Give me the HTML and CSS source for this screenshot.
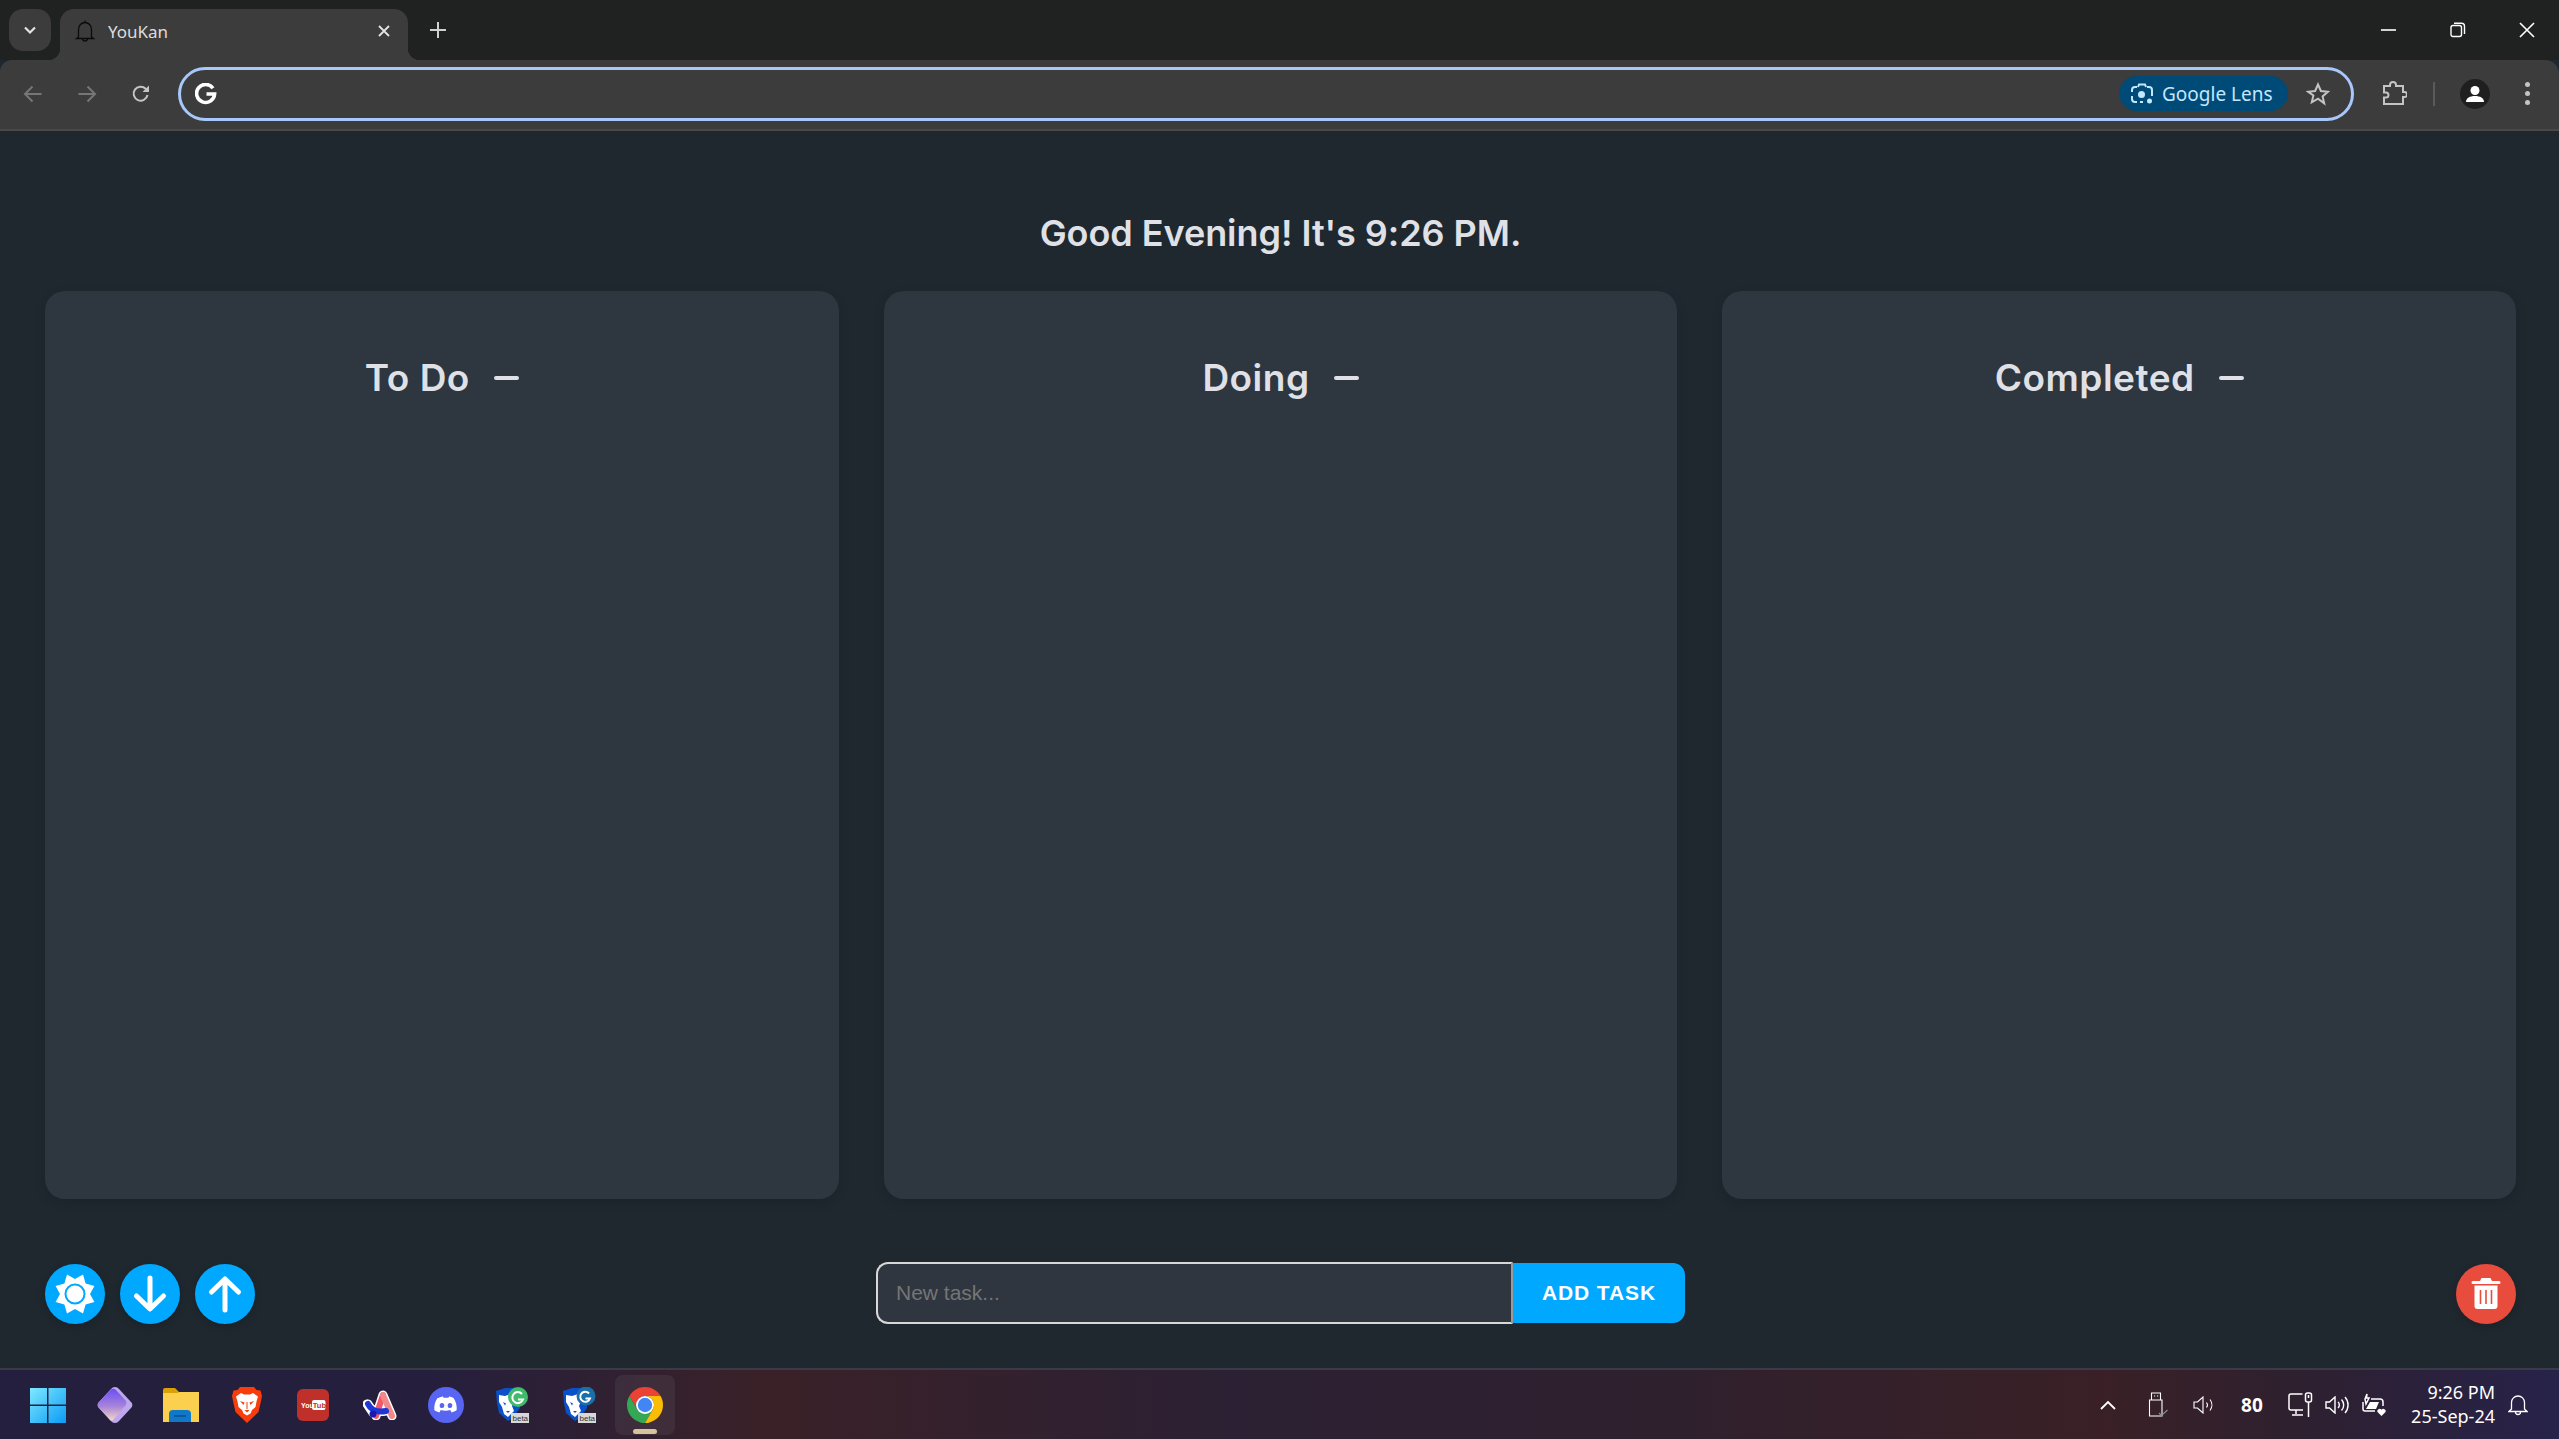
FILE: index.html
```html
<!DOCTYPE html>
<html lang="en">
<head>
  <meta charset="UTF-8" />
  <meta name="viewport" content="width=device-width,initial-scale=1.0" />
  <title>YouKan</title>
  <link rel="stylesheet" href="styles.css">
</head>
<body>
  <div class="tabstrip">
    <div class="tab-search">
      <svg width="16" height="16" viewBox="0 0 16 16"><path d="M3 5.500l5 5 5-5" fill="none" stroke="#e3e3e3" stroke-width="2.200"/></svg>
    </div>
    <div class="tab">
      <svg class="tab-bell" width="22" height="24" viewBox="0 0 22 24"><path d="M11 1.500v2M4.500 18V10.500a6.500 7 0 0 1 13 0V18l2 1.500H2.500zM8.500 19.500a2.500 2.500 0 0 0 5 0" fill="none" stroke="#0b0b0b" stroke-width="1.300"/></svg>
      <span class="tab-title">YouKan</span>
      <svg class="tab-close" width="12" height="12" viewBox="0 0 12 12"><path d="M1 1l10 10M11 1L1 11" stroke="#e3e3e3" stroke-width="1.800"/></svg>
    </div>
    <svg class="new-tab" width="16" height="16" viewBox="0 0 16 16"><path d="M8 0v16M0 8h16" stroke="#d0d0d0" stroke-width="2"/></svg>
    <div class="window-btns">
      <div class="window-btn"><svg width="16" height="16" viewBox="0 0 16 16"><path d="M0 8h15" stroke="#fff" stroke-width="1.600"/></svg></div>
      <div class="window-btn"><svg width="16" height="16" viewBox="0 0 16 16"><rect x="1" y="3.500" width="10.500" height="11" rx="2" fill="none" stroke="#fff" stroke-width="1.400"/><path d="M4 1.200h7.500a3 3 0 0 1 3 3V12" fill="none" stroke="#fff" stroke-width="1.400"/></svg></div>
      <div class="window-btn"><svg width="16" height="16" viewBox="0 0 16 16"><path d="M1 1l14 14M15 1L1 15" stroke="#fff" stroke-width="1.600"/></svg></div>
    </div>
  </div>

  <div class="toolbar">
    <div class="nav-btn"><svg width="20" height="20" viewBox="0 0 20 20"><path d="M18.500 10H2M9.500 2.500L2 10l7.500 7.500" fill="none" stroke="#767676" stroke-width="2"/></svg></div>
    <div class="nav-btn"><svg width="20" height="20" viewBox="0 0 20 20"><path d="M1.500 10H18M10.500 2.500L18 10l-7.500 7.500" fill="none" stroke="#767676" stroke-width="2"/></svg></div>
    <div class="nav-btn"><svg width="20" height="20" viewBox="0 0 20 20"><path d="M16.500 11a7 7 0 1 1-1.800-6.200L17 7" fill="none" stroke="#c4c4c4" stroke-width="2"/><path d="M18 1.500V8h-6.500z" fill="#c4c4c4"/></svg></div>
    <div class="omnibox">
      <svg class="omni-g" width="22" height="22" viewBox="0 0 22 22"><path d="M18 5.300A9 9 0 1 0 19.600 11H11.500" fill="none" stroke="#fff" stroke-width="3.600"/></svg>
      <div class="lens-pill">
        <svg width="24" height="24" viewBox="0 0 24 24"><path d="M7 5H5a3 3 0 0 0-3 3v2M2 14v3a3 3 0 0 0 3 3h2M10 20h3M17 5h2a3 3 0 0 1 3 3v6M8 5l1-2.500h6L16 5" fill="none" stroke="#c2e7ff" stroke-width="2"/><circle cx="11.500" cy="12.500" r="3.500" fill="#c2e7ff"/><circle cx="19.500" cy="19" r="2.500" fill="#c2e7ff"/></svg>
        <span>Google Lens</span>
      </div>
      <svg class="star" width="24" height="24" viewBox="0 0 24 24"><path d="M12 2.500l2.900 6.500 7 .7-5.300 4.700 1.600 6.900L12 16.700l-6.200 3.600 1.600-6.900L2.100 9.700l7-.7z" fill="none" stroke="#c4c4c4" stroke-width="2"/></svg>
    </div>
    <div class="toolbar-right">
      <svg class="ext" width="25" height="25" viewBox="0 0 25 25"><path d="M2 5h6V4a3 3 0 0 1 6 0v1h7v6h1.500a2.500 2.500 0 0 1 0 5H21v7H2v-6.500h2a2.500 2.500 0 0 0 0-5H2z" fill="none" stroke="#c4c4c4" stroke-width="2"/></svg>
      <div class="toolbar-sep"></div>
      <div class="avatar">
        <svg width="30" height="30" viewBox="0 0 30 30"><circle cx="15" cy="11.500" r="4.500" fill="#fff"/><path d="M6 23c0-4 4-6 9-6s9 2 9 6z" fill="#fff"/></svg>
      </div>
      <div class="dots"><i></i><i></i><i></i></div>
    </div>
  </div>

  <main class="page">
    <h1 class="greeting">Good Evening! It's 9:26 PM.</h1>

    <div class="board">
      <section class="column">
        <div class="column-head"><h2>To Do</h2><span class="collapse"></span></div>
      </section>
      <section class="column">
        <div class="column-head"><h2>Doing</h2><span class="collapse"></span></div>
      </section>
      <section class="column">
        <div class="column-head"><h2>Completed</h2><span class="collapse"></span></div>
      </section>
    </div>

    <div class="footer">
      <div class="footer-left">
        <button class="round-btn">
          <svg width="60" height="60" viewBox="0 0 60 60"><path d="M45 30L49.400 38 40.600 40.600 38 49.400 30 45 22 49.400 19.400 40.600 10.600 38 15 30 10.600 22 19.400 19.400 22 10.600 30 15 38 10.600 40.600 19.400 49.400 22z" fill="#fff"/><circle cx="30" cy="30" r="9.500" fill="#fff" stroke="#00a8ff" stroke-width="2"/></svg>
        </button>
        <button class="round-btn">
          <svg width="60" height="60" viewBox="0 0 60 60"><path d="M30 14V44M16.500 32L30 45 43.500 32" fill="none" stroke="#fff" stroke-width="5" stroke-linecap="round" stroke-linejoin="round"/></svg>
        </button>
        <button class="round-btn">
          <svg width="60" height="60" viewBox="0 0 60 60"><path d="M30 46V16M16.500 28L30 15 43.500 28" fill="none" stroke="#fff" stroke-width="5" stroke-linecap="round" stroke-linejoin="round"/></svg>
        </button>
      </div>
      <div class="task-form">
        <input class="task-input" type="text" placeholder="New task..." />
        <button class="task-add">ADD TASK</button>
      </div>
      <div class="footer-right">
        <button class="round-btn round-btn-danger">
          <svg width="60" height="60" viewBox="0 0 60 60"><path d="M24 17l1.500-3h9L36 17h7a1.500 1.500 0 0 1 0 3H17a1.500 1.500 0 0 1 0-3z" fill="#fff"/><path d="M18.500 21.500h23V42a3 3 0 0 1-3 3h-17a3 3 0 0 1-3-3z" fill="#fff"/><path d="M24.500 26v14M30 26v14M35.500 26v14" stroke="#e74c3c" stroke-width="1.600"/></svg>
        </button>
      </div>
    </div>
  </main>

  <footer class="taskbar">
    <div class="task-icons">
      <div class="task-icon">
        <svg width="36" height="36" viewBox="0 0 36 36"><defs><linearGradient id="winG" x1="0" y1="0" x2="1" y2="1"><stop offset="0" stop-color="#7fe9ff"/><stop offset="1" stop-color="#0a9bf5"/></linearGradient></defs><path d="M0 1h17v16.500H0zM18.500 1H36v16.500H18.500zM0 19h17v17H0zM18.500 19H36v17H18.500z" fill="url(#winG)"/></svg>
      </div>
      <div class="task-icon task-icon-gem">
        <svg width="36" height="38" viewBox="0 0 36 38"><defs><linearGradient id="gemG" x1="0" y1="0" x2="0" y2="1"><stop offset="0" stop-color="#6b4ff5"/><stop offset=".55" stop-color="#a884d8"/><stop offset="1" stop-color="#f3d9c4"/></linearGradient></defs><path d="M14 3a5 5 0 0 1 8 0l12 13a4 4 0 0 1 0 6L22 35a5 5 0 0 1-8 0L2 22a4 4 0 0 1 0-6z" fill="#bfa7ee"/><path d="M14 3.500a4 4 0 0 1 5 .5l10 11c1 2 0 4-1 5L16 34c-1 1-2 1-3 0L2 22a4 4 0 0 1 0-6z" fill="url(#gemG)"/></svg>
      </div>
      <div class="task-icon">
        <svg width="36" height="34" viewBox="0 0 36 34"><path d="M0 2a2 2 0 0 1 2-2h10l4 4h20v4H0z" fill="#d9a106"/><path d="M0 5h14l3-1h19v30H0z" fill="#fcd04f"/><path d="M6 34v-8a4 4 0 0 1 4-4h14a4 4 0 0 1 4 4v8z" fill="#0f78c9"/><path d="M11 28h12" stroke="#0a4f8a" stroke-width="1.500"/></svg>
      </div>
      <div class="task-icon">
        <svg width="30" height="36" viewBox="0 0 30 36"><path d="M8 0h14l2.500 3 4 .5L30 9l-1 5-2.500 11L15 36 3.500 25 1 14 0 9l1.500-5.500 4-.5z" fill="#f83c0c"/><path d="M9 6l3 1.500h6L21 6l5 3.500-1.500 5-1 5.500-3.500 3-1.500 3.500-3.500 2-3.500-2L10 23l-3.500-3-1-5.500L4 9.500z" fill="#fff"/><path d="M8 14l4.500 1.500-1 2.500zM22 14l-4.500 1.500 1 2.500zM12.500 23h5L15 25.500z" fill="#f83c0c"/><path d="M15 15v7" stroke="#f83c0c" stroke-width="1"/></svg>
      </div>
      <div class="task-icon">
        <svg width="32" height="32" viewBox="0 0 32 32"><rect width="32" height="32" rx="6" fill="#c0302b"/><text x="4" y="19" class="yt-you">You</text><rect x="15" y="11" width="13.500" height="10" rx="2" fill="#fff"/><text x="15.800" y="19" class="yt-tube">Tube</text></svg>
      </div>
      <div class="task-icon task-icon-arc">
        <svg width="36" height="30" viewBox="0 0 36 30"><path d="M5 14c3 6 8 9 18 7M13 26L20 5l9 21M4 14l6 9" fill="none" stroke="#fff" stroke-width="9" stroke-linecap="round" stroke-linejoin="round"/><path d="M13 26L20 5" fill="none" stroke="#f2596a" stroke-width="6" stroke-linecap="round"/><path d="M20 5l9 21" fill="none" stroke="#f08a8a" stroke-width="6" stroke-linecap="round"/><path d="M5 14c3 6 8 9 18 7" fill="none" stroke="#1f36d6" stroke-width="6" stroke-linecap="round"/><circle cx="10" cy="24" r="3.500" fill="#1a1ab0"/></svg>
      </div>
      <div class="task-icon">
        <svg width="36" height="36" viewBox="0 0 36 36"><circle cx="18" cy="18" r="18" fill="#5865f2"/><path d="M10.500 11c2-1 3.500-1.500 4.500-1.500l.6 1.200h4.800l.6-1.200c1 0 2.500.5 4.500 1.500 2.500 3.500 3.500 7.500 3.200 12-1.700 1.300-3.500 2.100-5 2.500l-1.200-1.900-.2-.6c-3 1.100-6.600 1.100-9.600 0l-.2.600-1.200 1.900c-1.500-.4-3.300-1.200-5-2.500-.3-4.500.7-8.500 3.200-12z" fill="#fff"/><ellipse cx="14" cy="18.500" rx="2.300" ry="2.600" fill="#5865f2"/><ellipse cx="22" cy="18.500" rx="2.300" ry="2.600" fill="#5865f2"/></svg>
      </div>
      <div class="task-icon">
        <svg width="36" height="36" viewBox="0 0 36 36"><path d="M2 4l9-3h11l4 8v12l-7 10-5 3-9-8-2-10z" fill="#0a50c8"/><path d="M5 8l6 1 6-2 3 7-2 5 2 5-6 6-4-3-2-7-3-5zM9 15l3 1.500-1 2zM12 24h4l-2 2z" fill="#fff" fill-rule="evenodd"/><circle cx="24" cy="10" r="10" fill="#3fbb6b"/><path d="M28 7a5.500 5.500 0 1 0 1 5.500h-5" fill="none" stroke="#fff" stroke-width="2"/><rect x="17" y="26" width="18" height="10" fill="#d8d8d8"/><text x="18.500" y="34" class="beta-label">beta</text></svg>
      </div>
      <div class="task-icon">
        <svg width="36" height="36" viewBox="0 0 36 36"><path d="M2 4l9-3h11l4 8v12l-7 10-5 3-9-8-2-10z" fill="#0a50c8"/><path d="M5 8l6 1 6-2 3 7-2 5 2 5-6 6-4-3-2-7-3-5zM9 15l3 1.500-1 2zM12 24h4l-2 2z" fill="#fff" fill-rule="evenodd"/><circle cx="25" cy="9" r="9.500" fill="#1c6ea8"/><path d="M28 6.500a5 5 0 1 0 1 5h-4.500" fill="none" stroke="#fff" stroke-width="2"/><rect x="17" y="26" width="18" height="10" fill="#d8d8d8"/><text x="18.500" y="34" class="beta-label">beta</text></svg>
      </div>
      <div class="task-icon task-icon-active">
        <svg width="36" height="36" viewBox="4 4 40 40"><path d="M6.680 14A20 20 0 0 1 41.320 14H24a10 10 0 0 0-8.660 15z" fill="#ea4335"/><path d="M6.680 14A20 20 0 0 0 24 44L32.660 29H15.340z" fill="#34a853"/><path d="M41.320 14A20 20 0 0 1 24 44L32.660 29A10 10 0 0 0 24 14z" fill="#fbbc04"/><circle cx="24" cy="24" r="10" fill="#fff"/><circle cx="24" cy="24" r="8" fill="#4285f4"/></svg>
        <span class="active-mark"></span>
      </div>
    </div>

    <div class="tray">
      <svg width="16" height="10" viewBox="0 0 16 10"><path d="M1 9l7-7 7 7" fill="none" stroke="#fff" stroke-width="1.800"/></svg>
      <svg class="tray-usb" width="21" height="25" viewBox="0 0 21 25"><path d="M2 8h12v16H1.500V8zM3.500 8V1h9v7" fill="none" stroke="#fff" stroke-width="1.100"/><path d="M6 4h1.200M9 4h1.200" stroke="#fff"/><path d="M11 21l2.500 2.500 6-5.500" fill="none" stroke="#8e8e8e" stroke-width="1.100"/></svg>
      <svg class="tray-gap" width="22" height="18" viewBox="0 0 22 18"><path d="M1 6h3.500L10 1v16l-5.500-5H1z" fill="none" stroke="#fff" stroke-width="1.100"/><path d="M13.500 6.500a4 4 0 0 1 0 5M17 3.500a9 9 0 0 1 0 11" fill="none" stroke="#fff" stroke-width="1.100"/></svg>
      <span class="tray-temp">80</span>
      <svg class="tray-gap-sm" width="25" height="25" viewBox="0 0 25 25"><path d="M14.500 2H3a2 2 0 0 0-2 2v12a2 2 0 0 0 2 2h12M8 18v4M4 23h11" fill="none" stroke="#fff" stroke-width="1.500"/><rect x="17.500" y="1" width="6" height="9" rx="2" fill="none" stroke="#fff" stroke-width="1.500"/><path d="M20.500 10v15M20.500 3v3" stroke="#fff" stroke-width="1.500"/></svg>
      <svg class="tray-gap-xs" width="24" height="18" viewBox="0 0 24 18"><path d="M1 6h3.500L10 1v16l-5.500-5H1z" fill="none" stroke="#fff" stroke-width="1.400"/><path d="M13 6a4 4 0 0 1 0 6M16.500 3.500a8 8 0 0 1 0 11M20 1a12 12 0 0 1 0 16" fill="none" stroke="#fff" stroke-width="1.400"/></svg>
      <svg class="tray-gap-xs" width="25" height="24" viewBox="0 0 25 24"><path d="M4 6L6 1 5.500 5H8L5 11zM2 9v7a2 2 0 0 0 2 2h10M10 6h9a3 3 0 0 1 3 3v4" fill="none" stroke="#fff" stroke-width="1.500"/><path d="M5 16l4-7h9l-3 7z" fill="#fff"/><path d="M20.500 23l-4-4a2.300 2.300 0 0 1 4-2.200 2.300 2.300 0 0 1 4 2.200z" fill="#fff"/></svg>
      <div class="clock">
        <span>9:26 PM</span>
        <span>25-Sep-24</span>
      </div>
      <svg class="tray-bell" width="20" height="22" viewBox="0 0 20 22"><path d="M3.500 15V8.500a6.500 6.500 0 0 1 13 0V15l2.500 2.500H1zM7.500 18a2.500 2.500 0 0 0 5 0" fill="none" stroke="#fff" stroke-width="1.300"/></svg>
    </div>
  </footer>
</body>
</html>
```

FILE: styles.css
```css
* { box-sizing: border-box; margin: 0; padding: 0; }
html, body {
  width: 100%;
  height: 100%;
  overflow: hidden;
}
body {
  height: 1439px;
  display: flex;
  flex-direction: column;
  background: #1f272f;
  font-family: "Inter", sans-serif;
  color: #dfe1e6;
}

/* browser tab strip */
.tabstrip {
  height: 60px;
  flex: none;
  display: flex;
  align-items: flex-start;
  background: #202221;
  padding: 9px 0 0 9px;
}
.tab-search {
  width: 42px; height: 42px;
  display: flex; align-items: center; justify-content: center;
  background: #3c3c3c;
  border-radius: 14px;
}
.tab {
  position: relative;
  width: 348px; height: 51px;
  margin-left: 9px;
  display: flex; align-items: center;
  padding: 0 18px 7px 14px;
  background: #3c3c3c;
  border-radius: 14px 14px 0 0;
}
.tab::before, .tab::after {
  content: "";
  position: absolute;
  bottom: 0;
  width: 12px; height: 12px;
}
.tab::before {
  left: -12px;
  background: radial-gradient(circle at 0 0, transparent 12px, #3c3c3c 12.500px);
}
.tab::after {
  right: -12px;
  background: radial-gradient(circle at 100% 0, transparent 12px, #3c3c3c 12.500px);
}
.tab-title {
  margin-left: 12px;
  font-family: "Noto Sans", sans-serif;
  font-size: 17px;
  color: #dcdcdc;
}
.tab-close { margin-left: auto; }
.new-tab { margin: 13px 0 0 22px; }
.window-btns {
  margin-left: auto;
  margin-right: -2px;
  margin-top: -9px;
  display: flex;
}
.window-btn {
  width: 69px; height: 59px;
  display: flex; align-items: center; justify-content: center;
}

/* browser toolbar */
.toolbar {
  height: 71px;
  flex: none;
  display: flex;
  align-items: center;
  padding: 0 0 2px 6px;
  background: #3c3c3c;
  border-bottom: 2px solid #494949;
  border-radius: 12px 14px 0 0;
}
.nav-btn {
  width: 54px; height: 54px;
  display: flex; align-items: center; justify-content: center;
}
.omnibox {
  flex: 1;
  height: 54px;
  margin-left: 10px;
  display: flex;
  align-items: center;
  padding: 0 21px 0 14px;
  border: 3px solid #a8c7fa;
  border-radius: 27px;
}
.omni-g { flex: none; }
.lens-pill {
  margin-left: auto;
  width: 169px; height: 35px;
  display: flex; align-items: center;
  gap: 8px;
  padding-left: 11px;
  border-radius: 18px;
  background: #004a77;
  color: #c2e7ff;
  font-family: "Noto Sans", sans-serif;
  font-size: 19px;
}
.star { margin-left: 18px; }
.toolbar-right {
  width: 205px;
  flex: none;
  display: flex;
  align-items: center;
  padding-left: 28px;
}
.toolbar-sep {
  width: 2px; height: 24px;
  margin-left: 26px;
  background: #5a5a5a;
}
.avatar {
  width: 30px; height: 30px;
  margin-left: 25px;
  border-radius: 50%;
  background: #1f1f1f;
}
.dots {
  margin-left: 35px;
  display: flex; flex-direction: column; gap: 4px;
}
.dots i {
  display: block;
  width: 5px; height: 5px;
  border-radius: 50%;
  background: #c4c4c4;
}

/* app page */
.page {
  flex: 1;
  min-height: 0;
  display: flex;
  flex-direction: column;
  padding: 77px 43px 44px 45px;
}
.greeting {
  height: 50px;
  line-height: 50px;
  text-align: center;
  font-size: 36px;
  font-weight: 600;
  letter-spacing: -0.05px;
}
.board {
  flex: 1;
  min-height: 0;
  margin-top: 33px;
  display: grid;
  grid-template-columns: repeat(3, 1fr);
  gap: 45px;
}
.column {
  padding-top: 62px;
  background: #2e3640;
  border-radius: 20px;
  box-shadow: 0 4px 12px rgba(0, 0, 0, 0.1);
}
.column-head {
  height: 50px;
  display: flex;
  align-items: center;
  justify-content: center;
  gap: 24px;
}
.column-head h2 {
  font-size: 37px;
  font-weight: 600;
  line-height: 50px;
  letter-spacing: 0.5px;
}
.collapse {
  width: 25px; height: 4px;
  border-radius: 2px;
  background: #dfe1e6;
}

.footer {
  height: 62px;
  flex: none;
  margin-top: 63px;
  display: grid;
  grid-template-columns: 1fr auto 1fr;
  align-items: center;
}
.footer-left { display: flex; gap: 15px; align-self: end; }
.footer-right { display: flex; justify-content: flex-end; align-self: end; }
.round-btn {
  width: 60px; height: 60px;
  display: block;
  border: none;
  border-radius: 50%;
  background: #00a8ff;
  box-shadow: 0 2px 8px rgba(0, 0, 0, 0.15);
}
.round-btn svg { display: block; }
.round-btn-danger { background: #e74c3c; }
.task-form { display: flex; align-items: center; }
.task-input {
  width: 637px; height: 62px;
  padding: 0 18px;
  background: #2f3640;
  border: 2px solid #d8d8d8;
  border-right-color: #9a9a9a;
  border-radius: 12px 0 0 12px;
  font-family: "Liberation Sans", sans-serif;
  font-size: 21px;
  color: #eee;
}
.task-input::placeholder { color: #757575; opacity: 1; }
.task-add {
  width: 172px; height: 60px;
  border: none;
  border-radius: 0 12px 12px 0;
  background: #00a8ff;
  color: #fff;
  font-family: "Liberation Sans", sans-serif;
  font-size: 21px;
  font-weight: 700;
  letter-spacing: 0.9px;
}

/* windows taskbar */
.taskbar {
  height: 71px;
  flex: none;
  display: flex;
  align-items: center;
  padding-left: 15px;
  border-top: 2px solid #3b3b47;
  background: linear-gradient(90deg, #241f3e 0%, #251f3d 17%, #3a2127 30%, #2c2034 48%, #2f202e 65%, #3a2026 82%, #2e2030 90%, #27224a 100%);
}
.task-icons { display: flex; }
.task-icon {
  position: relative;
  width: 66.300px; height: 60px;
  display: flex; align-items: center; justify-content: center;
}
.task-icon-gem svg, .task-icon-arc svg { margin-left: 2px; }
.task-icon-active {
  width: 60px;
  margin-left: 3px;
  background: rgba(255, 255, 255, 0.06);
  border-radius: 8px;
}
.active-mark {
  position: absolute;
  left: 18px; bottom: 1px;
  width: 24px; height: 5px;
  border-radius: 3px;
  background: #d8c49c;
}
.yt-you, .yt-tube {
  font-family: "Liberation Sans", sans-serif;
  font-size: 7.500px;
  font-weight: 700;
}
.yt-you { fill: #fff; font-size: 7px; }
.yt-tube { fill: #c0302b; }
.beta-label {
  font-family: "Liberation Sans", sans-serif;
  font-size: 8px;
  fill: #333;
}
.tray {
  margin-left: auto;
  padding-right: 31px;
  display: flex;
  align-items: center;
}
.tray-usb { margin-left: 32px; }
.tray-gap { margin-left: 24px; }
.tray-temp {
  margin-left: 26px;
  width: 24px;
  font-family: "Noto Sans", sans-serif;
  font-size: 19px;
  font-weight: 700;
  color: #fff;
}
.tray-gap-sm { margin-left: 23px; }
.tray-gap-xs { margin-left: 12px; }
.clock {
  margin-left: 25px;
  padding-bottom: 2px;
  display: flex;
  flex-direction: column;
  align-items: flex-end;
  font-family: "Noto Sans", sans-serif;
  font-size: 18px;
  line-height: 24px;
  color: #fff;
}
.tray-bell { margin-left: 13px; }
```
